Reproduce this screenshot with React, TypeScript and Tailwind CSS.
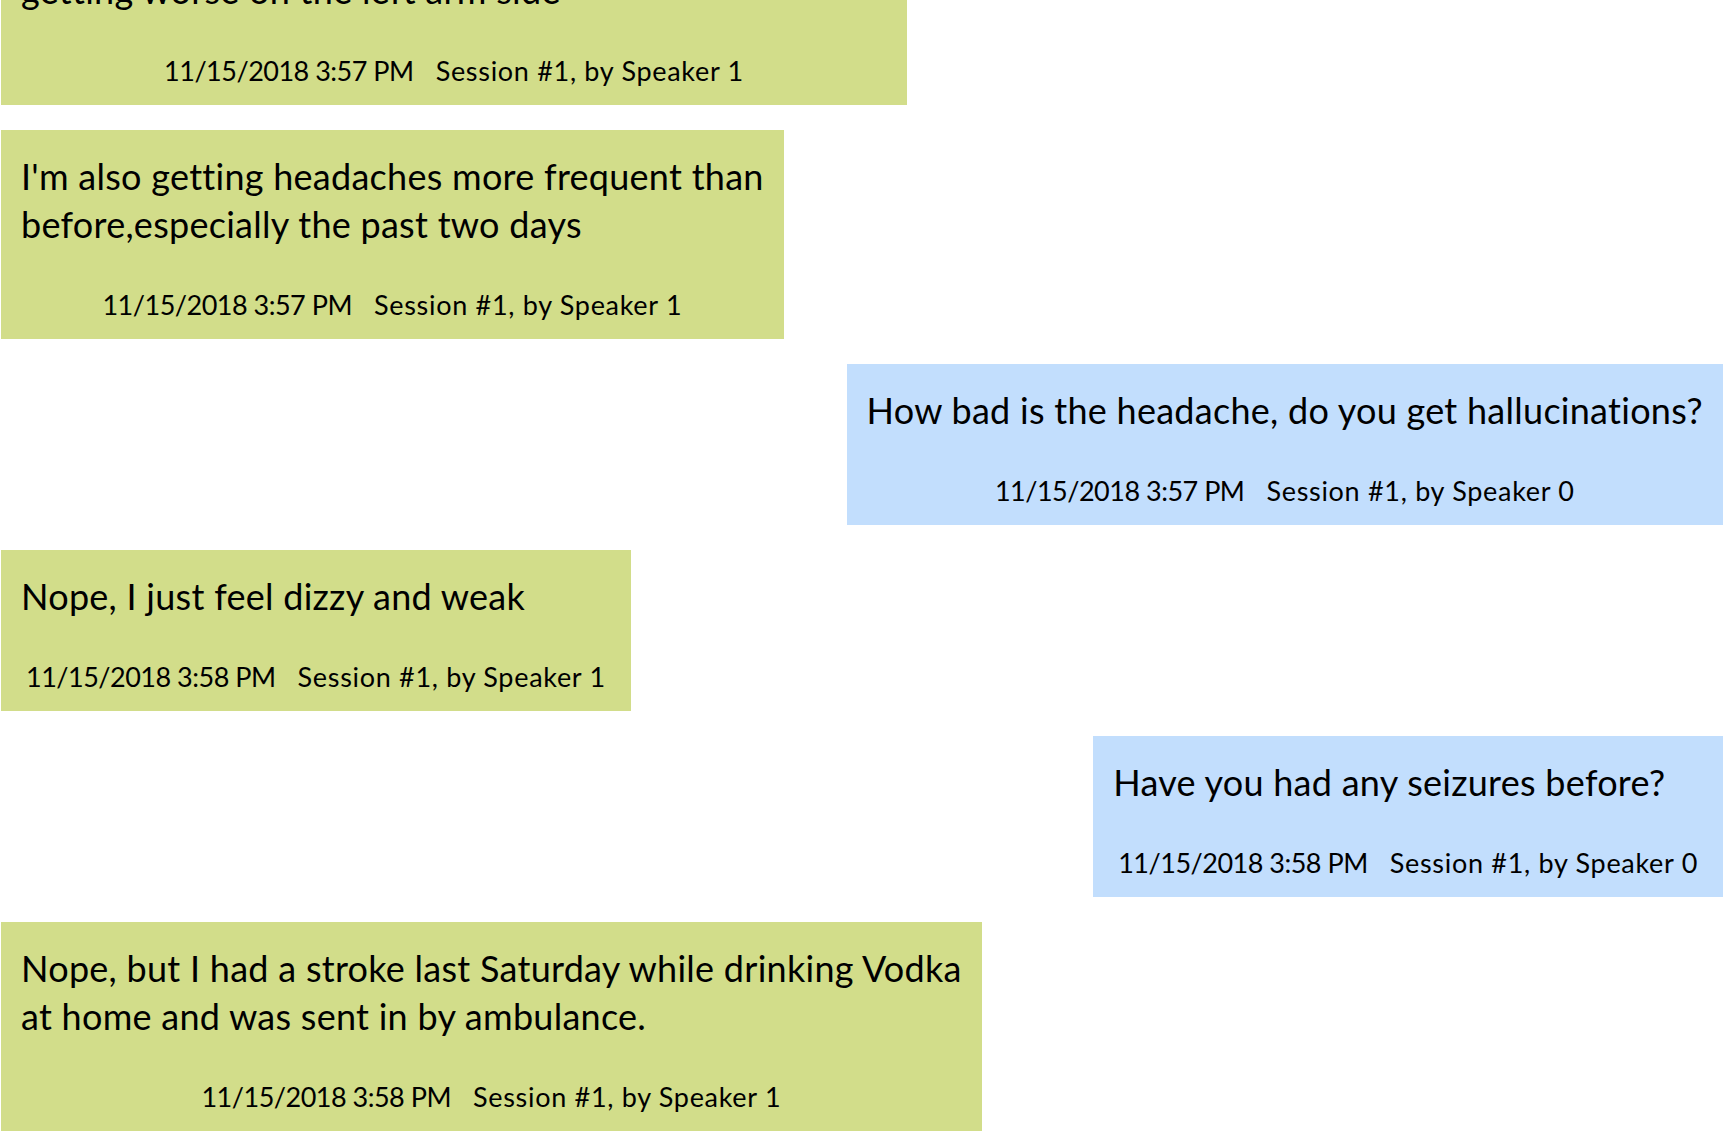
import React from "react";

type Msg = {
  side: "left" | "right";
  lines: string[];
  date: string;
  speaker: string;
  width?: string;
};

const messages: Msg[] = [
  {
    side: "left",
    lines: ["\u00a0", "getting worse on the left arm side"],
    date: "11/15/2018 3:57 PM",
    speaker: "Session #1, by Speaker 1",
    width: "w-[906px]",
  },
  {
    side: "left",
    lines: ["I'm also getting headaches more frequent than", "before,especially the past two days"],
    date: "11/15/2018 3:57 PM",
    speaker: "Session #1, by Speaker 1",
  },
  {
    side: "right",
    lines: ["How bad is the headache, do you get hallucinations?"],
    date: "11/15/2018 3:57 PM",
    speaker: "Session #1, by Speaker 0",
  },
  {
    side: "left",
    lines: ["Nope, I just feel dizzy and weak"],
    date: "11/15/2018 3:58 PM",
    speaker: "Session #1, by Speaker 1",
  },
  {
    side: "right",
    lines: ["Have you had any seizures before?"],
    date: "11/15/2018 3:58 PM",
    speaker: "Session #1, by Speaker 0",
  },
  {
    side: "left",
    lines: ["Nope, but I had a stroke last Saturday while drinking Vodka", "at home and was sent in by ambulance."],
    date: "11/15/2018 3:58 PM",
    speaker: "Session #1, by Speaker 1",
  },
];

function Bubble({ m }: { m: Msg }) {
  const isLeft = m.side === "left";
  return (
    <div
      className={
        (isLeft ? "self-start ml-[1px] bg-[#d2dd8a] " : "self-end bg-[#c2defd] ") +
        "pt-[22px] pb-[16px] px-[20px] text-black " +
        (m.width ?? "")
      }
    >
      <div className="text-[36px] leading-[48px] tracking-[0.27px] whitespace-nowrap">
        {m.lines.map((l, i) => (
          <div key={i}>{l}</div>
        ))}
      </div>
      <div className="mt-[39px] px-[5px] text-center text-[27px] leading-[36px] whitespace-nowrap">
        <span className="tracking-[-0.5px]">{m.date}</span>
        <span className="ml-[22px] tracking-[0.7px]">{m.speaker}</span>
      </div>
    </div>
  );
}

export default function App() {
  return (
    <div className="w-full h-screen overflow-hidden bg-white font-[Lato,sans-serif]">
      <div className="-mt-[104px] flex flex-col gap-[25px]">
        {messages.map((m, i) => (
          <Bubble key={i} m={m} />
        ))}
      </div>
    </div>
  );
}
